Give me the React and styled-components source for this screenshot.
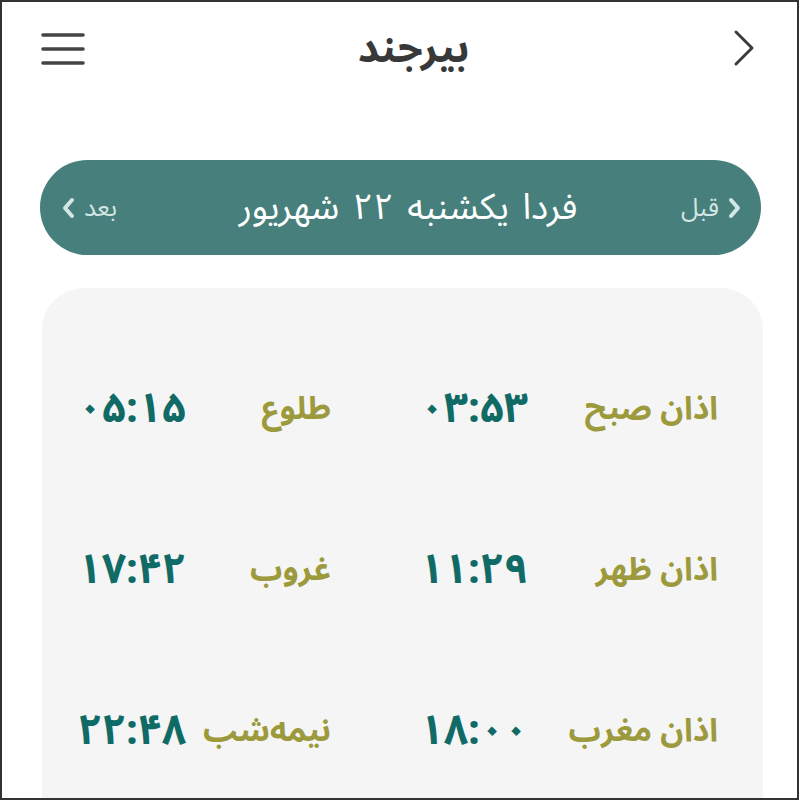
import React from "react";
import styled, { createGlobalStyle } from "styled-components";

const GlobalStyle = createGlobalStyle`
  html, body {
    margin: 0;
    padding: 0;
    background: #fff;
  }
  * {
    box-sizing: border-box;
  }
`;

const Frame = styled.div`
  width: 799px;
  height: 800px;
  border: 2px solid #333;
  overflow: hidden;
  background: #fff;
  direction: rtl;
  font-family: "Noto Sans Arabic", "DejaVu Sans", sans-serif;
  display: flex;
  flex-direction: column;
`;

const Header = styled.header`
  flex-shrink: 0;
  height: 94px;
  display: flex;
  align-items: center;
  justify-content: space-between;
  padding: 0 40px 0 38px;
`;

const IconButton = styled.button`
  border: none;
  background: none;
  padding: 0;
  display: flex;
  align-items: center;
  cursor: pointer;
`;

const Title = styled.h1`
  margin: 0 0 0 8px;
  font-size: 41px;
  font-weight: 700;
  color: #383838;
  line-height: 1;
`;

const DateBar = styled.div`
  flex-shrink: 0;
  margin: 64px 36px 0 38px;
  height: 95px;
  border-radius: 48px;
  background: #467f7b;
  display: flex;
  align-items: center;
  justify-content: space-between;
  padding: 0 20px 0 22px;
`;

const NavLink = styled.span`
  display: flex;
  align-items: center;
  gap: 9px;
  color: #d3e6e3;
  font-size: 25px;
`;

const DateText = styled.div`
  color: #fff;
  font-size: 36px;
  word-spacing: 4px;
  margin-left: 18px;
`;

const Card = styled.div`
  margin: 33px 34px 0 40px;
  flex: 1;
  min-height: 0;
  background: #f5f5f5;
  border-radius: 42px 42px 0 0;
  padding: 40px 45px 0 20px;
  display: grid;
  grid-template-columns: 190px 197px 145px auto;
  grid-auto-rows: 161px;
  align-items: center;
  align-content: start;
`;

const Label = styled.span`
  color: #9c9a3c;
  font-size: 32px;
  font-weight: 700;
`;

const Time = styled.span`
  color: #106a66;
  font-size: 42px;
  font-weight: 700;
  letter-spacing: 1px;
`;

const Chevron = ({ dir = "right", color = "#d3e6e3" }) => (
  <svg width="13" height="22" viewBox="0 0 13 22">
    <path
      d={dir === "right" ? "M3 3 L10 11 L3 19" : "M10 3 L3 11 L10 19"}
      fill="none"
      stroke={color}
      strokeWidth="4"
      strokeLinecap="round"
      strokeLinejoin="round"
    />
  </svg>
);

const times = [
  ["اذان صبح", "۰۳:۵۳", "طلوع", "۰۵:۱۵"],
  ["اذان ظهر", "۱۱:۲۹", "غروب", "۱۷:۴۲"],
  ["اذان مغرب", "۱۸:۰۰", "نیمه‌شب", "۲۲:۴۸"],
];

export default function App() {
  return (
    <>
      <GlobalStyle />
      <Frame>
        <Header>
          <IconButton aria-label="back">
            <svg width="24" height="40" viewBox="0 0 24 40">
              <path
                d="M3 3 L19 19 L3 35"
                fill="none"
                stroke="#3c3c3c"
                strokeWidth="3"
                strokeLinecap="round"
                strokeLinejoin="round"
              />
            </svg>
          </IconButton>
          <Title>بیرجند</Title>
          <IconButton aria-label="menu">
            <svg width="46" height="34" viewBox="0 0 46 34">
              <g stroke="#444" strokeWidth="3.6" strokeLinecap="round">
                <line x1="3" y1="3" x2="43" y2="3" />
                <line x1="3" y1="17" x2="43" y2="17" />
                <line x1="3" y1="31" x2="43" y2="31" />
              </g>
            </svg>
          </IconButton>
        </Header>

        <DateBar>
          <NavLink>
            <Chevron dir="right" />
            قبل
          </NavLink>
          <DateText>فردا  یکشنبه ۲۲ شهریور</DateText>
          <NavLink>
            بعد
            <Chevron dir="left" />
          </NavLink>
        </DateBar>

        <Card>
          {times.map((row) => (
            <React.Fragment key={row[0]}>
              <Label>{row[0]}</Label>
              <Time>{row[1]}</Time>
              <Label>{row[2]}</Label>
              <Time>{row[3]}</Time>
            </React.Fragment>
          ))}
        </Card>
      </Frame>
    </>
  );
}
